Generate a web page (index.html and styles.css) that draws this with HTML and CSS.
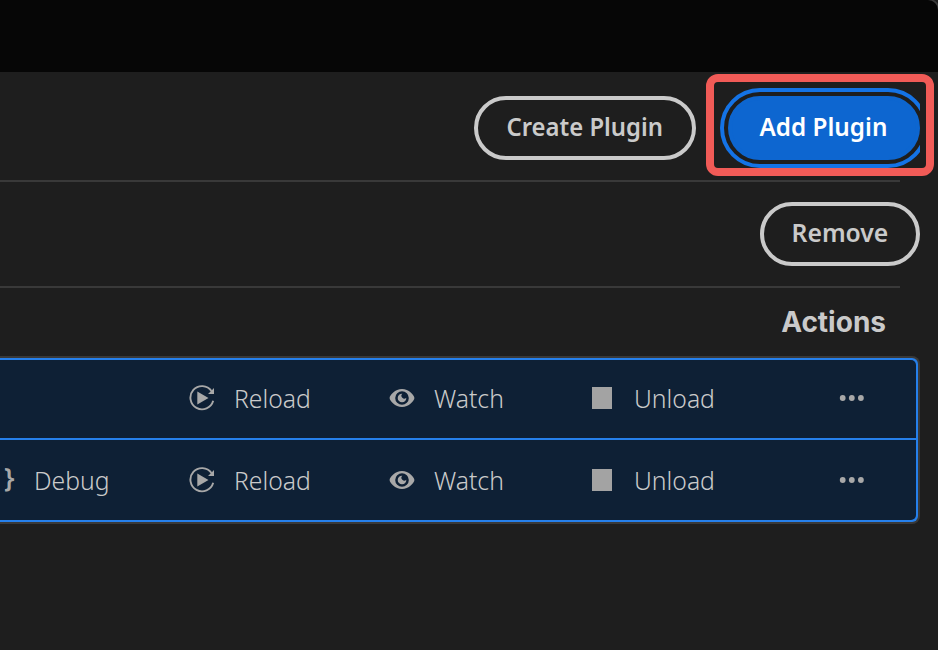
FILE: index.html
```html
<!DOCTYPE html>
<html lang="en">
<head>
<meta charset="utf-8">
<title>Plugins</title>
<link rel="stylesheet" href="styles.css">
</head>
<body>
<svg class="defs" aria-hidden="true">
  <symbol id="reload" viewBox="0 0 26 26">
    <path d="M22.500 6A11.600 11.600 0 1 0 24.200 15.800" fill="none" stroke="currentColor" stroke-width="1.900"/>
    <path d="M25 3v6h-6z M8.300 6.500v13L19.500 13z" fill="currentColor"/>
  </symbol>
  <symbol id="watch" viewBox="0 0 26 26">
    <path fill="currentColor" fill-rule="evenodd" d="M13 4C6.200 4 .6 10.200.6 13S6.200 22 13 22s12.400-6.200 12.400-9S19.800 4 13 4zm0 2.200a6.800 6.800 0 1 1 0 13.600a6.800 6.800 0 0 1 0-13.600z"/>
    <path fill="currentColor" d="M13.300 8.700a4.300 4.300 0 1 0 4 4a2.300 2.300 0 1 1-4-4z"/>
  </symbol>
  <symbol id="more" viewBox="0 0 26 26">
    <g fill="currentColor"><circle cx="3.700" cy="13" r="2.900"/><circle cx="12.800" cy="13" r="2.900"/><circle cx="21.900" cy="13" r="2.900"/></g>
  </symbol>
</svg>
<header class="titlebar"></header>
<section class="toolbar">
  <button class="btn create"><span>Create Plugin</span></button>
  <div class="focus"><button class="btn add"><span>Add Plugin</span></button></div>
  <div class="highlight"></div>
</section>
<section class="selection">
  <button class="btn remove"><span>Remove</span></button>
</section>
<div class="heading"><span>Actions</span></div>
<main class="table">
  <div class="row">
    <div class="action"></div>
    <div class="action"><svg><use href="#reload"/></svg><span>Reload</span></div>
    <div class="action"><svg><use href="#watch"/></svg><span>Watch</span></div>
    <div class="action"><i class="stop"></i><span>Unload</span></div>
    <div class="more"><svg><use href="#more"/></svg></div>
  </div>
  <div class="row">
    <div class="action"><b class="brace">}</b><span>Debug</span></div>
    <div class="action"><svg><use href="#reload"/></svg><span>Reload</span></div>
    <div class="action"><svg><use href="#watch"/></svg><span>Watch</span></div>
    <div class="action"><i class="stop"></i><span>Unload</span></div>
    <div class="more"><svg><use href="#more"/></svg></div>
  </div>
</main>
</body>
</html>
```
FILE: styles.css
```css
*, *::before { box-sizing: border-box; }
body { margin: 0; height: 650px; background: #1e1e1e; color: #cacaca; font-family: "Noto Sans", sans-serif; overflow: hidden; }
.defs { position: absolute; width: 0; height: 0; }
.titlebar { height: 72px; background: #060606; border-top-right-radius: 10px; box-shadow: 1px 0 0 1px #3c3c3c; clip-path: inset(0); }
.toolbar, .selection { width: 900px; display: flex; justify-content: flex-end; border-bottom: 2px solid #393939; }
.toolbar { position: relative; height: 110px; padding-top: 24px; }
.selection { height: 106px; padding-top: 20px; }
.btn { flex: none; height: 64px; padding: 0; border: 4px solid #cacaca; border-radius: 32px; background: transparent; color: #cacaca; font: 600 26px/52px "Noto Sans", sans-serif; display: flex; justify-content: center; }
.btn span, .action span, .heading span { display: inline-block; white-space: nowrap; }
.create { width: 222px; margin-right: 24px; }
.create span { transform: translateX(-.5px) scaleX(.918); }
.focus { flex: none; width: 200px; height: 80px; margin: -8px -20px 0 0; overflow: hidden; position: relative; padding: 8px 0 0 8px; }
.focus::before { content: ""; position: absolute; left: 0; top: 0; width: 208px; height: 80px; border: 4px solid #1473e6; border-radius: 40px; }
.add { position: relative; width: 192px; border-color: #0d66d0; background: #0d66d0; color: #fff; }
.add span { transform: translateX(-1px) scaleX(.934); }
.highlight { position: absolute; left: 706px; top: 2px; width: 228px; height: 102px; border: 8px solid #f15b57; border-radius: 12px; }
.remove { width: 160px; margin-right: -20px; }
.remove span { transform: scaleX(.95); }
.heading { height: 68px; width: 886px; text-align: right; font: 700 28px/68px Inter, sans-serif; }
.table { width: 920px; height: 168px; border: 2px solid #393939; border-left: 0; border-radius: 0 8px 8px 0; background: #2680eb; padding: 2px 2px 2px 0; display: flex; flex-direction: column; gap: 2px; }
.row { height: 78px; background: #0e2035; display: flex; align-items: center; padding-bottom: 2px; }
.row:first-child { border-top-right-radius: 5px; }
.row:last-child { height: 80px; padding-bottom: 0; border-bottom-right-radius: 5px; }
.action { width: 200px; height: 40px; display: flex; align-items: center; gap: 19px; font-size: 26px; font-weight: 300; line-height: 40px; }
.action:first-child { width: 189px; padding-left: 4px; gap: 20px; }
.action svg, .more svg { width: 26px; height: 26px; color: #a8a8a8; display: block; }
.action span { transform: scaleX(.95); transform-origin: left; }
.stop { width: 20px; height: 22px; margin: 0 3px; background: #a3a3a3; }
.brace { width: 10px; height: 40px; font: 600 27px/34px "Noto Sans", sans-serif; color: #a8a8a8; }
.more { margin-left: 50px; }
```
